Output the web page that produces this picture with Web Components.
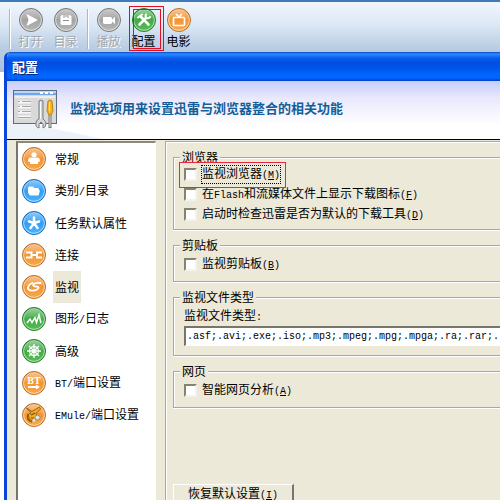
<!DOCTYPE html>
<html lang="zh-CN">
<head>
<meta charset="utf-8">
<title>配置</title>
<style>
  html, body {
    height: 100%;
  }

  body {
    margin: 0;
    overflow: hidden;
    background: #fff;
    color: #000;
    font: 12px/16px "Noto Sans CJK SC", sans-serif;
  }
</style>
</head>
<body>
<app-window>
  <tool-bar slot="toolbar">
    <tool-button icon="play" tone="gray" disabled>打开</tool-button>
    <tool-button icon="disk" tone="gray" disabled>目录</tool-button>
    <tool-divider></tool-divider>
    <tool-button icon="camera" tone="gray" disabled>播放</tool-button>
    <tool-button icon="tools" tone="green" marked>配置</tool-button>
    <tool-button icon="tv" tone="orange">电影</tool-button>
  </tool-bar>
  <config-dialog>
    <span slot="title">配置</span>
    <span slot="summary">监视选项用来设置迅雷与浏览器整合的相关功能</span>
    <nav-item slot="nav" icon="person" tone="orange">常规</nav-item>
    <nav-item slot="nav" icon="folder" tone="blue">类别<half-width>/</half-width>目录</nav-item>
    <nav-item slot="nav" icon="star" tone="blue">任务默认属性</nav-item>
    <nav-item slot="nav" icon="link" tone="orange">连接</nav-item>
    <nav-item slot="nav" icon="watch" tone="orange" selected>监视</nav-item>
    <nav-item slot="nav" icon="chart" tone="green">图形<half-width>/</half-width>日志</nav-item>
    <nav-item slot="nav" icon="wheel" tone="green">高级</nav-item>
    <nav-item slot="nav" icon="bt" tone="orange"><half-width>BT/</half-width>端口设置</nav-item>
    <nav-item slot="nav" icon="emule" tone="orange"><half-width>EMule/</half-width>端口设置</nav-item>
    <option-group name="浏览器">
      <check-option marked>监视浏览器<half-width>(<u>M</u>)</half-width></check-option>
      <check-option>在<half-width>Flash</half-width>和流媒体文件上显示下载图标<half-width>(<u>F</u>)</half-width></check-option>
      <check-option>启动时检查迅雷是否为默认的下载工具<half-width>(<u>D</u>)</half-width></check-option>
    </option-group>
    <option-group name="剪贴板" roomy>
      <check-option>监视剪贴板<half-width>(<u>B</u>)</half-width></check-option>
    </option-group>
    <option-group name="监视文件类型">
      <text-option value=".asf;.avi;.exe;.iso;.mp3;.mpeg;.mpg;.mpga;.ra;.rar;.rm;.rmvb;.tar;.wma;.wmp;.wmv;.zip;">监视文件类型<half-width>:</half-width></text-option>
    </option-group>
    <option-group name="网页" roomy>
      <check-option>智能网页分析<half-width>(<u>A</u>)</half-width></check-option>
    </option-group>
    <push-button slot="action">恢复默认设置<half-width>(<u>I</u>)</half-width></push-button>
  </config-dialog>
</app-window>

<script>
const TONES = {
  gray: ["#b9b9b9", "#8d8d8d", "#7b7b7b"],
  green: ["#58bd58", "#2b9b32", "#267d2b"],
  orange: ["#f9a94c", "#ee8218", "#b4702c"],
  blue: ["#4db5fb", "#128af0", "#1a66b8"],
};

const GLYPHS = {
  play: `<path fill="#fff" d="M7.500 6L19 12 7.500 18l2-6z"/>`,
  disk: `<path fill="#fff" d="M8 7h8l1.500 1.500V16l-1 1h-9l-1-1V8.500z"/><path stroke="#8f8f8f" d="M10 7v3M12 7v2M14 7v3M9 12.500h6"/>`,
  camera: `<path fill="#fff" d="M6 9h8l1 1v1.500L18 9v7l-3-2.500V15l-1 1H7l-1-1z"/>`,
  tools: `<g fill="none" stroke="#fff" stroke-linecap="round"><path stroke-width="2.600" d="M9 9l7.500 7.500M7.500 16.500L14 10"/><path stroke-width="2" d="M6 9.500L10 6.500M14 6.500c-1 2-.5 3 1 3.500s2.500 0 3-1"/></g>`,
  tv: `<g fill="none" stroke="#fff" stroke-width="1.700"><rect x="6.500" y="9.500" width="11" height="8" rx="1"/><path d="M9 6l3 3 3-3"/></g>`,
  person: `<circle cx="12" cy="7.800" r="2.600" fill="#fff"/><path fill="#fff" d="M8.500 10.500h7c1.800 0 2.500 1.500 2.500 4l-2 .5v2H8v-2l-2-.5c0-2.500.7-4 2.500-4z"/>`,
  folder: `<path fill="#fff" d="M6 9l1-1.500h4l1.500 1.500H16l1 1v1l1 .5-1.500 5H8L6 14z"/>`,
  star: `<path stroke="#fff" stroke-width="2.500" stroke-linecap="round" d="M12 12V6.500M12 12l-5-1.500M12 12l5-1.500M12 12l-3.500 5M12 12l3.500 5"/>`,
  link: `<g fill="none" stroke="#fff" stroke-width="2"><path d="M4 9.500h5.500v5H4M20 9.500h-5v5h5M9.500 12h5"/></g>`,
  watch: `<g fill="none" stroke="#fff" stroke-width="1.800" stroke-linecap="round"><path d="M10.500 8C7 9 5 12 6.500 14.500c1.500 1.500 6 1.500 8.500 0s2-3-.5-3-4-.5-3-2S15 7.500 18.500 8"/></g>`,
  chart: `<path fill="none" stroke="#fff" stroke-width="1.500" d="M5 16l3-4 2 3.500 3-5 1.500 5L17 8l2 8"/>`,
  wheel: `<g fill="none" stroke="#fff" stroke-width="1.300"><circle cx="12" cy="12" r="4.500"/><path d="M12 5v14M5 12h14M7 7l10 10M17 7L7 17"/></g>`,
  bt: `<text x="12" y="13" fill="#fff" font-family="Liberation Serif, serif" font-weight="bold" font-size="10" text-anchor="middle">BT</text><path fill="#fff" d="M6 15h8v-1.500l4 2.500-4 2.500V17H6z"/>`,
  emule: `<path fill="#f6a51e" stroke="#7a560f" stroke-width=".8" d="M4.500 5l5.500 3.500L17.500 4l1 2-4.500 4.500 1.500 3-3 5-5-2-1.500-5L9 10z"/><path fill="none" stroke="#7a560f" stroke-width="1.200" d="M6 11c-1.500 4 0 7 4 8M9 12l4-2M9 15h3"/><circle cx="15.500" cy="14.500" r="2.500" fill="#cbeaf5" stroke="#776" stroke-width=".7"/><circle cx="12" cy="17.500" r="1.600" fill="#d9e6e9"/>`,
};

// Shared shape: attach an open root and fill it from the class's markup.
class BaseElement extends HTMLElement {
  connectedCallback() {
    if (this.shadowRoot) return;
    this.attachShadow({ mode: "open" }).innerHTML = this.render();
  }
}

class HalfWidth extends BaseElement {
  // No whitespace round the slot: it would show inside the running text.
  render() {
    return `<style>
        :host {
          font-family: "Liberation Mono", monospace;
          font-size: 10px;
        }
      </style><slot></slot>`;
  }
}

class OrbIcon extends BaseElement {
  render() {
    const [light, dark, rim] = TONES[this.getAttribute("tone")];
    return `
      <style>
        :host {
          display: block;
          flex: none;
          width: 24px;
          height: 24px;
        }

        svg {
          display: block;
        }
      </style>
      <svg width="24" height="24" viewBox="0 0 24 24" aria-hidden="true">
        <defs>
          <linearGradient id="fill" x1="0" y1="0" x2="0" y2="1">
            <stop offset="0" stop-color="${dark}"/>
            <stop offset="1" stop-color="${light}"/>
          </linearGradient>
          <linearGradient id="gloss" x1="0" y1="0" x2="0" y2="1">
            <stop offset="0" stop-color="#fff" stop-opacity=".5"/>
            <stop offset="1" stop-color="#fff" stop-opacity=".05"/>
          </linearGradient>
        </defs>
        <circle cx="12" cy="12" r="11.500" fill="url(#fill)" stroke="${rim}"/>
        <circle cx="12" cy="12" r="10.400" fill="none" stroke="#fff" stroke-opacity=".6"/>
        <path fill="url(#gloss)" d="M2 12a10 10 0 0 1 20 0c-4-3-14-3-20 0z"/>
        ${GLYPHS[this.getAttribute("name")]}
      </svg>
    `;
  }
}

class AppWindow extends BaseElement {
  render() {
    return `
      <style>
        :host {
          display: flex;
          flex-direction: column;
          height: 100vh;
          overflow: hidden;
          background: linear-gradient(#b9cde3, #a9bfd9) 0 52px / 100% 20px no-repeat, #fff;
        }

        main {
          display: flex;
          flex: 1;
          min-height: 0;
          padding-left: 4px;
        }

        ::slotted(config-dialog) {
          flex: 1;
        }
      </style>
      <slot name="toolbar"></slot>
      <main><slot></slot></main>
    `;
  }
}

class ToolBar extends BaseElement {
  render() {
    return `
      <style>
        :host {
          display: flex;
          flex: none;
          align-items: center;
          box-sizing: border-box;
          height: 52px;
          padding: 3px 0 0 5px;
          border-top: 2px solid #3f7ab9;
          background: linear-gradient(#f0f6fd, #dce8f5 45%, #b4c8e0);
        }
      </style>
      <tool-divider></tool-divider>
      <slot></slot>
    `;
  }
}

class ToolDivider extends BaseElement {
  render() {
    return `
      <style>
        :host {
          flex: none;
          width: 1px;
          height: 40px;
          margin: 0 2px 0 4px;
          border-left: 1px solid #a9b8c9;
          background: #fff;
        }
      </style>
    `;
  }
}

class ToolButton extends BaseElement {
  render() {
    const disabled = this.hasAttribute("disabled") ? "disabled" : "";
    return `
      <style>
        :host {
          position: relative;
          flex: none;
          width: 35px;
        }

        button {
          display: flex;
          flex-direction: column;
          align-items: center;
          gap: 1px;
          width: 100%;
          padding: 0;
          border: 0;
          background: none;
          color: inherit;
          font: inherit;
        }

        button:disabled {
          color: #a3a8ae;
          text-shadow: 1px 1px #fff;
        }

        :host([marked])::before,
        :host([marked])::after {
          content: "";
          position: absolute;
          border: 1px solid #e01020;
        }

        :host([marked])::before {
          inset: -2px -3px -2px 3px;
        }

        :host([marked])::after {
          inset: 1px 0 0 7px;
        }
      </style>
      <button type="button" ${disabled}>
        <orb-icon name="${this.getAttribute("icon")}" tone="${this.getAttribute("tone")}"></orb-icon>
        <slot></slot>
      </button>
    `;
  }
}

class ConfigDialog extends BaseElement {
  render() {
    return `
      <style>
        :host {
          display: flex;
          flex-direction: column;
          min-width: 0;
          border-left: 3px solid #0b46dc;
          border-top-left-radius: 6px;
          background: #ece9d8;
          overflow: hidden;
        }

        h1 {
          flex: none;
          margin: 0 0 0 -3px;
          padding-left: 8px;
          background: linear-gradient(#0b46c8, #2a8cff 2px, #0a5cf0 6px, #0050e0 10px, #0054e8 16px, #0066ff 22px, #0066ff 26px, #0040c0);
          color: #fff;
          font-size: 13px;
          line-height: 29px;
          text-shadow: 1px 1px #062a80;
        }

        header {
          display: flex;
          flex: none;
          align-items: center;
          gap: 12px;
          box-sizing: border-box;
          height: 59px;
          padding: 0 0 4px 5px;
          border-bottom: 1px solid #000;
          background: linear-gradient(12deg, #edf1f8 12%, transparent 13%), linear-gradient(#c6cdfc, #e9e8fd 30%, #fff 75%);
        }

        h2 {
          margin: 0;
          color: #145f98;
          font-size: 13px;
          line-height: 20px;
          white-space: nowrap;
        }

        .body {
          display: flex;
          flex: 1;
          gap: 8px;
          min-height: 0;
          padding: 1px 0 0 9px;
        }

        nav {
          flex: none;
          box-sizing: border-box;
          width: 140px;
          padding: 0 4px;
          border: solid;
          border-width: 2px 1px 0 2px;
          border-color: #8b897b #fff #fff #77766a;
          background: #fff;
        }

        section {
          display: flex;
          flex: 1;
          flex-direction: column;
          gap: 8px;
          min-width: 0;
          padding: 8px 0 0 7px;
          border: solid #aca899;
          border-width: 1px 0 0 1px;
          margin-left: 1px;
          box-shadow: inset 1px 1px #fff;
        }

        footer {
          margin-top: 68px;
        }
      </style>
      <h1><slot name="title"></slot></h1>
      <header>
        <svg width="46" height="42" viewBox="0 0 46 42" aria-hidden="true">
          <rect x="1.500" y="3.500" width="43" height="33" fill="#d8d9d8" stroke="#5b6b80"/>
          <path fill="#eceded" d="M3 9h40v2H3z"/>
          <path fill="#72a5e8" d="M2 4h42v4H2z"/>
          <path fill="#b8d6ff" d="M2 4h42v2H2z"/>
          <path fill="#fff" d="M28 5h3v2h-3zM33 5h3v2h-3zM38 5h3v2h-3z"/>
          <path stroke="#f8f8f8" stroke-width="3" d="M6 15h13M6 20h13M6 25h13M6 30h13"/>
          <path stroke="#a5a7a8" d="M6 14.500h2M10 14.500h9M6 19.500h2M10 19.500h9M6 24.500h2M10 24.500h9M6 30.500h13"/>
          <path fill="#d4d6d8" stroke="#777b80" d="M27 14q2-2 4 0v18q3 2 3 5 0 3-3 4v-4l-2-2-2 2v4q-4-1-3-5 0-3 3-4z"/>
          <path stroke="#f9fafa" d="M28.500 15v17"/>
          <path stroke="#777" stroke-width="3" d="M38 27v14"/>
          <path stroke="#e4e4e4" d="M38 28v12"/>
          <path fill="#f6b521" stroke="#bd811b" d="M36 14q2-2 4 0l1 10-2 4h-2l-2-4z"/>
          <path stroke="#ffe47a" d="M37.500 15v9"/>
        </svg>
        <h2><slot name="summary"></slot></h2>
      </header>
      <div class="body">
        <nav><slot name="nav"></slot></nav>
        <section>
          <slot></slot>
          <footer><slot name="action"></slot></footer>
        </section>
      </div>
    `;
  }
}

class NavItem extends BaseElement {
  render() {
    return `
      <style>
        :host {
          display: block;
        }

        a {
          display: flex;
          align-items: center;
          gap: 7px;
          height: 32px;
          color: inherit;
          text-decoration: none;
          white-space: nowrap;
        }

        span {
          padding: 0 2px;
        }

        :host([selected]) span {
          background: #ece9d8;
          line-height: 32px;
        }
      </style>
      <a href="#${this.getAttribute("icon")}">
        <orb-icon name="${this.getAttribute("icon")}" tone="${this.getAttribute("tone")}"></orb-icon>
        <span><slot></slot></span>
      </a>
    `;
  }
}

class OptionGroup extends BaseElement {
  render() {
    return `
      <style>
        :host {
          display: block;
        }

        fieldset {
          min-width: 0;
          margin: 0;
          padding: 0 0 5px 10px;
          border: solid #aca899;
          border-width: 1px 0 1px 1px;
          box-shadow: 0 1px #fff, inset 1px 1px #fff;
        }

        :host([roomy]) fieldset {
          padding: 2px 0 7px 10px;
        }

        legend {
          margin-left: -4px;
          padding: 0 2px;
          background: #ece9d8;
          line-height: 14px;
        }
      </style>
      <fieldset>
        <legend>${this.getAttribute("name")}</legend>
        <slot></slot>
      </fieldset>
    `;
  }
}

class CheckOption extends BaseElement {
  render() {
    return `
      <style>
        :host {
          display: block;
          position: relative;
        }

        label {
          display: flex;
          align-items: center;
          gap: 4px;
          height: 20px;
          white-space: nowrap;
        }

        input {
          appearance: none;
          box-sizing: border-box;
          width: 13px;
          height: 13px;
          margin: 0;
          border: 2px solid;
          border-color: #85826f #f5f3e8 #f5f3e8 #85826f;
          background: #fff;
        }

        span {
          padding: 0 1px;
        }

        :host([marked]) span {
          outline: 1px dotted #000;
          outline-offset: -1px;
        }

        :host([marked])::after {
          content: "";
          position: absolute;
          z-index: 1;
          top: -2px;
          left: -5px;
          width: 105px;
          height: 24px;
          border: 1px solid #e8283c;
        }
      </style>
      <label><input type="checkbox"><span><slot></slot></span></label>
    `;
  }
}

class TextOption extends BaseElement {
  render() {
    return `
      <style>
        :host {
          display: block;
        }

        label {
          display: block;
          height: 22px;
          line-height: 22px;
        }

        input {
          box-sizing: border-box;
          display: block;
          width: 100%;
          height: 20px;
          margin-bottom: 4px;
          padding: 0 1px;
          border: solid;
          border-width: 2px 0 1px 2px;
          border-color: #77766a #fff #fff #77766a;
          border-radius: 0;
          background: #fff;
          font: 10px "Liberation Mono", monospace;
        }
      </style>
      <label for="types"><slot></slot></label>
      <input id="types" type="text" value="${this.getAttribute("value")}">
    `;
  }
}

class PushButton extends BaseElement {
  render() {
    return `
      <style>
        button {
          box-sizing: border-box;
          height: 22px;
          padding: 0 14px;
          border: solid;
          border-width: 1px 2px 2px 1px;
          border-color: #fff #77766a #77766a #fff;
          background: #ece9d8;
          color: inherit;
          font: inherit;
        }
      </style>
      <button type="button"><slot></slot></button>
    `;
  }
}

customElements.define("half-width", HalfWidth);
customElements.define("orb-icon", OrbIcon);
customElements.define("app-window", AppWindow);
customElements.define("tool-bar", ToolBar);
customElements.define("tool-divider", ToolDivider);
customElements.define("tool-button", ToolButton);
customElements.define("config-dialog", ConfigDialog);
customElements.define("nav-item", NavItem);
customElements.define("option-group", OptionGroup);
customElements.define("check-option", CheckOption);
customElements.define("text-option", TextOption);
customElements.define("push-button", PushButton);
</script>
</body>
</html>
